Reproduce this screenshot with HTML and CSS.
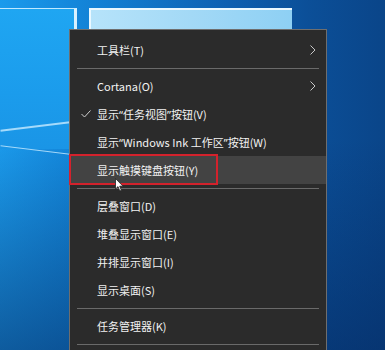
FILE: index.html
```html
<!DOCTYPE html>
<html lang="zh-CN">
<head>
    <meta charset="UTF-8">
    <title>任务栏右键菜单</title>
    <link rel="stylesheet" href="styles.css">
</head>
<body>
    <!-- Desktop wallpaper -->
    <div class="desktop">
        <div class="pane pane-left"></div>
        <div class="pane pane-right"></div>
        <div class="beam beam-1"></div>
        <div class="beam beam-2"></div>
    </div>

    <!-- Taskbar context menu -->
    <ul class="context-menu">
        <li class="menu-item has-sub">
            <span class="item-label">工具栏(T)</span>
            <svg class="chevron" viewBox="0 0 6 10" width="6" height="10"><polyline points="0.5 0.5 5 5 0.5 9.5"></polyline></svg>
        </li>
        <li class="separator"></li>
        <li class="menu-item has-sub">
            <span class="item-label">Cortana(O)</span>
            <svg class="chevron" viewBox="0 0 6 10" width="6" height="10"><polyline points="0.5 0.5 5 5 0.5 9.5"></polyline></svg>
        </li>
        <li class="menu-item checked">
            <svg class="check" viewBox="0 0 10 8" width="10" height="8"><polyline points="0.5 4 3.5 7 9.5 0.5"></polyline></svg>
            <span class="item-label">显示<span class="q">“</span>任务视图<span class="q">”</span>按钮(V)</span>
        </li>
        <li class="menu-item">
            <span class="item-label">显示<span class="q">“</span>Windows Ink 工作区<span class="q">”</span>按钮(W)</span>
        </li>
        <li class="menu-item hovered">
            <span class="item-label">显示触摸键盘按钮(Y)</span>
            <div class="mark-box"></div>
        </li>
        <li class="separator"></li>
        <li class="menu-item"><span class="item-label">层叠窗口(D)</span></li>
        <li class="menu-item"><span class="item-label">堆叠显示窗口(E)</span></li>
        <li class="menu-item"><span class="item-label">并排显示窗口(I)</span></li>
        <li class="menu-item"><span class="item-label">显示桌面(S)</span></li>
        <li class="separator"></li>
        <li class="menu-item"><span class="item-label">任务管理器(K)</span></li>
        <li class="separator"></li>
    </ul>

    <!-- Mouse pointer -->
    <svg class="pointer" viewBox="0 0 9 14" width="9" height="14">
        <path d="M0.5 0.5 L0.5 11 L3 8.6 L4.8 13 L6.4 12.3 L4.7 8.2 L8 8.2 Z"></path>
    </svg>
</body>
</html>
```

FILE: styles.css
```css
body {
    margin: 0;
    width: 385px;
    height: 350px;
    overflow: hidden;
    position: relative;
    font-family: "Noto Sans CJK SC", "Noto Sans", sans-serif;
}

/* Wallpaper */
.desktop {
    position: absolute;
    inset: 0;
    background:
        linear-gradient(180deg, rgba(6, 40, 100, 0) 40%, rgba(4, 40, 95, 0.55) 100%),
        linear-gradient(90deg, #1b9bec 0%, #1488dc 18%, #0d5fb0 60%, #0b4f98 80%, #0a4589 100%);
}

.pane {
    position: absolute;
    top: 8px;
    height: 60px;
}

.pane-left {
    left: 0;
    width: 74px;
    height: 140px;
    background: linear-gradient(180deg, #1fa6f2 0%, #1b9cec 60%, #1a95e6 100%);
    border-top: 1px solid #bfe8ff;
    border-right: 3px solid #d7f1ff;
}

.pane-right {
    left: 89px;
    width: 201px;
    background: linear-gradient(90deg, #b6e3fa 0%, #a3d9f6 50%, #8ed0f4 100%);
    border-top: 2px solid #eaf8ff;
    border-left: 2px solid #eaf8ff;
}

.beam {
    position: absolute;
    left: 0;
    width: 72px;
    height: 2px;
    background: rgba(200, 235, 255, 0.8);
}

.beam-1 {
    top: 121px;
    transform: rotate(-7deg);
    transform-origin: right center;
}

.beam-2 {
    top: 154px;
    height: 1px;
    transform: rotate(7deg);
    transform-origin: right center;
}

/* Context menu */
.context-menu {
    position: absolute;
    left: 69px;
    top: 29px;
    width: 256px;
    margin: 0;
    padding: 6px 0 10px;
    list-style: none;
    background: #2b2b2b;
    border: 1px solid #6e6e6e;
    color: #f2f2f2;
    font-size: 11px;
}

.menu-item {
    position: relative;
    height: 28px;
    display: flex;
    align-items: center;
    padding: 0 10px 0 27px;
}

.item-label {
    flex: 1;
    white-space: nowrap;
}

.q {
    font-family: "Noto Sans", sans-serif;
}

.menu-item.hovered {
    background: #434343;
}

.chevron {
    fill: none;
    stroke: #c8c8c8;
    stroke-width: 1;
}

.check {
    position: absolute;
    left: 11px;
    top: 10px;
    fill: none;
    stroke: #d0d0d0;
    stroke-width: 1;
}

.separator {
    height: 1px;
    margin: 4px 7px 3px 7px;
    background: #6a6a6a;
}

/* Red highlight box */
.mark-box {
    position: absolute;
    left: -1px;
    top: -2px;
    width: 145px;
    height: 27px;
    border: 2px solid #d3222c;
}

/* Mouse pointer */
.pointer {
    position: absolute;
    left: 115px;
    top: 178px;
    fill: #ffffff;
    stroke: #222222;
    stroke-width: 0.8;
}
```
